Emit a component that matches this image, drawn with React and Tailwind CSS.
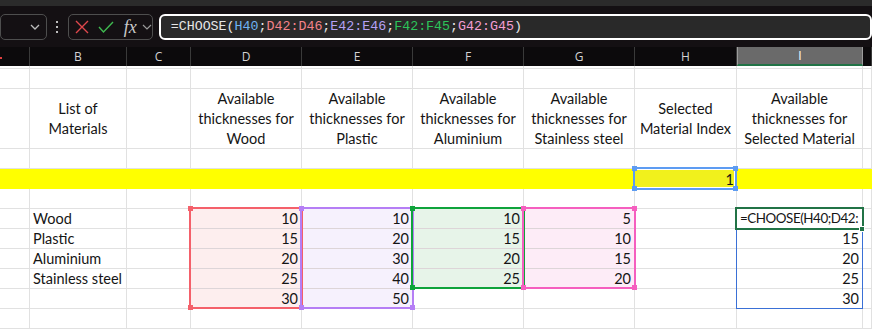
import React from "react";

const cols = [30, 97, 64, 111, 111, 111, 111, 102, 126, 9];
const letters = ["", "B", "C", "D", "E", "F", "G", "H", "I", ""];

const HEAD = {
  1: ["List of", "Materials"],
  3: ["Available", "thicknesses for", "Wood"],
  4: ["Available", "thicknesses for", "Plastic"],
  5: ["Available", "thicknesses for", "Aluminium"],
  6: ["Available", "thicknesses for", "Stainless steel"],
  7: ["Selected", "Material Index"],
  8: ["Available", "thicknesses for", "Selected Material"],
};

const data = [
  ["Wood", 10, 10, 10, 5, "=CHOOSE(H40;D42:"],
  ["Plastic", 15, 20, 15, 10, 15],
  ["Aluminium", 20, 30, 20, 15, 20],
  ["Stainless steel", 25, 40, 25, 20, 25],
  ["", 30, 50, "", "", 30],
];

const fills = {
  3: "bg-[#fdeeee]",
  4: "bg-[#f6f1fd]",
  5: "bg-[#e7f4e9]",
  6: "bg-[#fdecf7]",
};

function Cell({ w, className = "", children }) {
  return (
    <div
      className={"shrink-0 border-r border-b border-[#e1e1e1] overflow-hidden " + className}
      style={{ width: w }}
    >
      {children}
    </div>
  );
}

function Box({ l, t, w, h, color, handles = true, thin = false }) {
  const hs = handles
    ? [
        [l - 1, t - 1],
        [l + w - 4, t - 1],
        [l - 1, t + h - 4],
        [l + w - 4, t + h - 4],
      ]
    : [];
  return (
    <>
      <div
        className={"absolute pointer-events-none " + (thin ? "border" : "border-2")}
        style={{ left: l, top: t, width: w, height: h, borderColor: color }}
      />
      {hs.map(([x, y], i) => (
        <div
          key={i}
          className="absolute"
          style={{ left: x, top: y, width: 5, height: 5, background: color }}
        />
      ))}
    </>
  );
}

export default function App() {
  const font = { fontFamily: "Lato, 'Liberation Sans', sans-serif" };
  return (
    <div className="relative w-[872px] h-[333px] overflow-hidden bg-white">
      {/* top strip */}
      <div className="h-[6px] bg-[#2b2b2b]" />
      {/* formula bar row */}
      <div className="h-[41px] bg-[#141013] flex items-start pt-[8px]">
        <div className="w-[48px] h-[26px] rounded-[5px] border border-[#4e4e4e] flex items-center justify-end pr-[6px]">
          <svg width="10" height="6" viewBox="0 0 10 6">
            <path d="M1 1l4 4 4-4" fill="none" stroke="#bdbdbd" strokeWidth="1.3" />
          </svg>
        </div>
        <div className="w-[22px] h-[26px] flex flex-col items-center justify-center gap-[3px]">
          <div className="w-[2px] h-[2px] bg-[#bdbdbd]" />
          <div className="w-[2px] h-[2px] bg-[#bdbdbd]" />
          <div className="w-[2px] h-[2px] bg-[#bdbdbd]" />
        </div>
        <div className="w-[85px] h-[26px] rounded-[5px] border border-[#4e4e4e] flex items-center pl-[6px]">
          <svg width="14" height="14" viewBox="0 0 14 14">
            <path d="M1 1l12 12M13 1L1 13" stroke="#e0474c" strokeWidth="1.4" />
          </svg>
          <svg width="16" height="14" viewBox="0 0 16 14" className="ml-[9px]">
            <path d="M1 7l4.5 5L15 2" fill="none" stroke="#3fb950" strokeWidth="1.4" />
          </svg>
          <span
            className="ml-[10px] text-[18px] leading-none text-[#c9c9c9] italic"
            style={{ fontFamily: "'Liberation Serif', serif" }}
          >
            fx
          </span>
          <svg width="10" height="6" viewBox="0 0 10 6" className="ml-[5px]">
            <path d="M1 1l4 4 4-4" fill="none" stroke="#9a9a9a" strokeWidth="1.2" />
          </svg>
        </div>
        <div className="ml-[6px] w-[740px] h-[26px] rounded-[6px] border-2 border-white bg-[#292929] flex items-center pl-[10px]">
          <span
            className="text-[13.3px] leading-none text-[#e6e6e6] whitespace-pre"
            style={{ fontFamily: "'Liberation Mono', monospace" }}
          >
            =CHOOSE(
            <span className="text-[#6fb3f2]">H40</span>;
            <span className="text-[#f4838a]">D42:D46</span>;
            <span className="text-[#b6a2f5]">E42:E46</span>;
            <span className="text-[#2cc45a]">F42:F45</span>;
            <span className="text-[#f59fd4]">G42:G45</span>)
          </span>
        </div>
      </div>
      {/* column headers */}
      <div className="flex h-[19px] bg-[#0c0a0c]" style={{ fontFamily: "'Open Sans', sans-serif" }}>
        {cols.map((w, i) => (
          <div
            key={i}
            className={
              "shrink-0 flex items-center justify-center text-[12px] relative " +
              (i === 8
                ? "bg-[#6a6a6a] border-x border-[#9c9c9c] text-white border-b-2 border-b-[#217346]"
                : "border-r border-[#3a3a3a] text-[#d4d4d4]")
            }
            style={{ width: w }}
          >
            {letters[i]}
            {i === 0 && <div className="absolute left-0 top-[10px] w-[2px] h-[2px] bg-[#e04040]" />}
          </div>
        ))}
      </div>
      {/* grid */}
      <div className="text-[14.5px] text-[#151515]" style={font}>
        <div className="flex h-[3px]">
          {cols.map((w, i) => (
            <Cell key={i} w={w} />
          ))}
        </div>
        <div className="flex h-[20px]">
          {cols.map((w, i) => (
            <Cell key={i} w={w} />
          ))}
        </div>
        {/* header row */}
        <div className="flex h-[60px]">
          {cols.map((w, i) => (
            <Cell key={i} w={w} className="flex flex-col items-center justify-center leading-[20px] text-center whitespace-nowrap">
              {(HEAD[i] || []).map((t, k) => (
                <div key={k}>{t}</div>
              ))}
            </Cell>
          ))}
        </div>
        <div className="flex h-[20px]">
          {cols.map((w, i) => (
            <Cell key={i} w={w} />
          ))}
        </div>
        {/* yellow row */}
        <div className="flex h-[20px]">
          {cols.map((w, i) => (
            <div
              key={i}
              className={
                "shrink-0 flex items-end justify-end pr-[3px] leading-[19px] " +
                (i === 7 ? "bg-[#f1f11c]" : "bg-[#ffff00]")
              }
              style={{ width: w }}
            >
              {i === 7 ? "1" : ""}
            </div>
          ))}
        </div>
        <div className="flex h-[20px]">
          {cols.map((w, i) => (
            <Cell key={i} w={w} />
          ))}
        </div>
        {data.map((r, ri) => {
          const vals = { 1: r[0], 3: r[1], 4: r[2], 5: r[3], 6: r[4], 8: r[5] };
          return (
            <div key={ri} className="flex h-[20px]">
              {cols.map((w, i) => {
                let fill = "";
                if (i === 3 || i === 4) fill = fills[i];
                if ((i === 5 || i === 6) && ri < 4) fill = fills[i];
                const active = i === 8 && ri === 0;
                const left = i === 1 || active;
                return (
                  <Cell
                    key={i}
                    w={w}
                    className={
                      "flex items-end leading-[19px] whitespace-nowrap " +
                      (left ? "justify-start pl-[3px] " : "justify-end pr-[3px] ") +
                      (active ? "text-[13.4px] tracking-[-0.45px] pl-[2px] " : "") +
                      fill +
                      (fill ? " border-b-[#ddd5d8]" : "")
                    }
                  >
                    {vals[i] !== undefined ? vals[i] : ""}
                  </Cell>
                );
              })}
            </div>
          );
        })}
        <div className="flex h-[20px]">
          {cols.map((w, i) => (
            <Cell key={i} w={w} />
          ))}
        </div>
      </div>

      {/* range highlights */}
      <Box l={189} t={207} w={114} h={102} color="#f4606a" />
      <Box l={300} t={207} w={114} h={102} color="#b57ef5" />
      <Box l={411} t={207} w={114} h={82} color="#0fa33b" />
      <Box l={522} t={207} w={114} h={82} color="#f55fbf" />
      <div className="absolute border border-white" style={{ left: 634, top: 169, width: 101, height: 19 }} />
      <Box l={633} t={167} w={104} h={23} color="#5d9cf2" />
      <Box l={736} t={208} w={127} h={101} color="#3a70d6" handles={false} thin />
      <Box l={735} t={207} w={129} h={23} color="#217346" handles={false} />
      <div className="absolute bg-[#217346] border border-white" style={{ left: 859, top: 226, width: 6, height: 6 }} />
    </div>
  );
}
